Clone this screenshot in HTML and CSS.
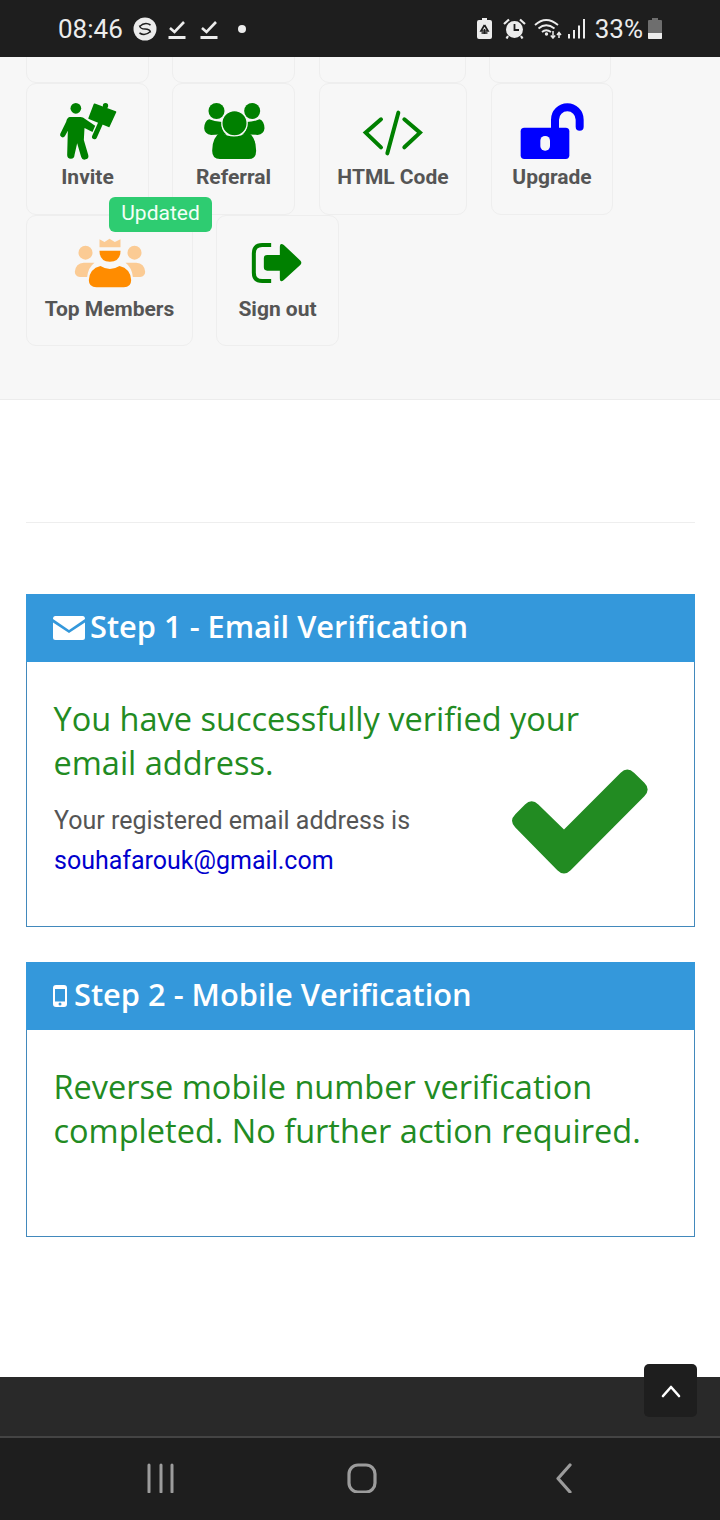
FILE: index.html
```html
<!DOCTYPE html>
<html lang="en">
<head>
  <meta charset="UTF-8">
  <meta name="viewport" content="width=device-width, initial-scale=1.0">
  <title>Verification</title>
  <link rel="stylesheet" href="styles.css">
</head>
<body>
  <!-- phone status bar -->
  <div class="status-bar">
    <span class="clock">08:46</span>
    <svg class="st-icon st-s" viewBox="0 0 24 24"><circle cx="12" cy="12" r="11.5" fill="#ececec"/><path d="M6.5 9.5 Q12 4.5 17.5 8 M6.5 8.5 Q7 12 12 12 Q17 12 17.5 15.5 M6.5 16 Q12 19.5 17.5 14.5" fill="none" stroke="#1e1e1e" stroke-width="1.5"/></svg>
    <svg class="st-icon st-check" viewBox="0 0 18 20"><path d="M2 9 L6.5 13 L16 3" fill="none" stroke="#ececec" stroke-width="2.6"/><rect x="0.500" y="17" width="17" height="3" fill="#ececec"/></svg>
    <svg class="st-icon st-check" viewBox="0 0 18 20"><path d="M2 9 L6.5 13 L16 3" fill="none" stroke="#ececec" stroke-width="2.6"/><rect x="0.500" y="17" width="17" height="3" fill="#ececec"/></svg>
    <span class="st-dot"></span>
    <span class="st-spacer"></span>
    <svg class="st-icon st-saver" viewBox="0 0 15 21"><path d="M5 0 H10 V2 H13 Q15 2 15 4 V19 Q15 21 13 21 H2 Q0 21 0 19 V4 Q0 2 2 2 H5Z" fill="#ececec"/><path d="M7.500 7 L4 13 H6.500 M7.500 7 L11 13 H8.500 M4.500 15 H10.500 M7.500 11 V16" fill="none" stroke="#1e1e1e" stroke-width="1.7"/></svg>
    <svg class="st-icon st-alarm" viewBox="0 0 23 21"><circle cx="11.500" cy="11.500" r="8.500" fill="#ececec"/><path d="M11.500 6 V12 H16" fill="none" stroke="#1e1e1e" stroke-width="1.8"/><path d="M1 6 L6 1.500 M22 6 L17 1.500 M5 18 L3.500 20.500 M18 18 L19.500 20.500" stroke="#ececec" stroke-width="2.2" fill="none"/></svg>
    <svg class="st-icon st-wifi" viewBox="0 0 29 21"><path d="M1 7 Q12 -3 24 7 M4.500 10.500 Q12 4 20.500 10.500 M8 14 Q12 10.500 17 14" fill="none" stroke="#ececec" stroke-width="1.8"/><circle cx="12.500" cy="16" r="1.700" fill="#ececec"/><path d="M19 13 V20 M16.800 17.500 L19 20 L21.200 17.500 M25 20 V15 M23 17 L25 14.500 L27 17" fill="none" stroke="#ececec" stroke-width="1.500"/></svg>
    <svg class="st-icon st-signal" viewBox="0 0 18 21"><path d="M1 16 V20.500 M6 12 V20.500 M11 7.500 V20.500 M16 1 V20.500" stroke="#ececec" stroke-width="2" fill="none"/></svg>
    <span class="st-pct">33%</span>
    <svg class="st-icon st-batt" viewBox="0 0 14 21"><path d="M4 0 H10 V2 H13 Q14 2 14 3 V20 Q14 21 13 21 H1 Q0 21 0 20 V3 Q0 2 1 2 H4Z" fill="#6e6e6e"/><path d="M0 15 H14 V20 Q14 21 13 21 H1 Q0 21 0 20Z" fill="#ececec"/></svg>
  </div>

  <!-- dashboard tiles -->
  <section class="tiles">
    <div class="tile-row tile-row-cut">
      <div class="tile tile-a"></div>
      <div class="tile tile-b"></div>
      <div class="tile tile-c"></div>
      <div class="tile tile-d"></div>
    </div>
    <div class="tile-row">
      <a class="tile tile-a">
        <svg class="tile-icon" viewBox="94.500 126 216 180">
          <circle cx="166" cy="145" r="16" fill="#008000"/>
          <path d="M147 171 H180 Q188 171 194 177 L224 197 L216 216 L192 204 L190 240 L203 284 A11 11 0 0 1 182 291 L170 250 L162 285 A11 11 0 0 1 140 285 L142 212 L133 229 A8 8 0 0 1 119 222 L137 185 Q140 173 147 171Z" fill="#008000"/>
          <path d="M222 133 L285 156 L265 199 L206 175Z" fill="#008000" stroke="#008000" stroke-width="5" stroke-linejoin="round"/>
          <circle cx="255" cy="137" r="8" fill="#008000"/>
          <path d="M240 190 L222 230" stroke="#008000" stroke-width="15" stroke-linecap="round"/>
        </svg>
        <span>Invite</span>
      </a>
      <a class="tile tile-b">
        <svg class="tile-icon" viewBox="532.500 126 216 180">
          <circle cx="588" cy="153" r="24" fill="#008000"/>
          <circle cx="695" cy="153" r="24" fill="#008000"/>
          <path d="M566 178 Q585 186 605 186 Q600 210 618 224 Q590 222 572 225 Q552 222 551 205 Q552 182 566 178Z" fill="#008000"/>
          <path d="M717 178 Q698 186 678 186 Q683 210 665 224 Q693 222 711 225 Q731 222 732 205 Q731 182 717 178Z" fill="#008000"/>
          <circle cx="642" cy="190" r="38" fill="#008000" stroke="#f7f7f7" stroke-width="4"/>
          <path d="M575 272 Q575 232 600 217 Q640 242 682 217 Q707 232 707 272 Q707 297 685 297 H598 Q575 297 575 272Z" fill="#008000"/>
        </svg>
        <span>Referral</span>
      </a>
      <a class="tile tile-c">
        <svg class="tile-icon" viewBox="141 126 216 180">
          <path d="M213 178 L167 218 L213 262 M283 178 L330 218 L283 262 M265 158 L232 280" fill="none" stroke="#008000" stroke-width="12" stroke-linecap="round"/>
        </svg>
        <span>HTML Code</span>
      </a>
      <a class="tile tile-d tile-upgrade">
        <svg class="tile-icon" viewBox="618 126 216 180">
          <rect x="632" y="203" width="146" height="94" rx="11" fill="#0000ff"/>
          <path d="M735 212 V179 A37 37 0 0 1 809 179 V200" fill="none" stroke="#0000ff" stroke-width="24" stroke-linecap="round"/>
          <rect x="691" y="228" width="29" height="44" rx="14" fill="#f7f7f7"/>
        </svg>
        <span>Upgrade</span>
      </a>
    </div>
    <div class="tile-row tile-row-last">
      <a class="tile tile-top">
        <span class="badge">Updated</span>
        <svg class="tile-icon" viewBox="160.500 132 216 180">
          <circle cx="195" cy="188" r="21" fill="#fbcb94"/>
          <circle cx="342" cy="188" r="21" fill="#fbcb94"/>
          <path d="M163 245 Q165 220 190 218 H222 Q203 232 200 261 H178 Q163 258 163 245Z" fill="#fbcb94"/>
          <path d="M374 245 Q372 220 347 218 H315 Q334 232 337 261 H359 Q374 258 374 245Z" fill="#fbcb94"/>
          <path d="M237 148 L252 156 L267 146 L283 156 L300 148 V172 H237Z" fill="#fbcb94"/>
          <path d="M237 182 H300 Q300 215 268 215 Q237 215 237 182Z" fill="#ff8c00"/>
          <path d="M205 270 Q207 236 240 228 Q268 246 297 228 Q330 236 332 270 Q332 292 310 292 H228 Q205 292 205 270Z" fill="#ff8c00"/>
        </svg>
        <span>Top Members</span>
      </a>
      <a class="tile tile-a">
        <svg class="tile-icon" viewBox="664.500 132 216 180">
          <path d="M752 165 H725 Q700 165 700 190 V248 Q700 273 725 273 H752" fill="none" stroke="#008000" stroke-width="12"/>
          <path d="M778 172 Q778 156 790 165 L840 212 Q845 218 840 224 L790 270 Q778 280 778 264 V242 H740 Q730 242 730 232 V205 Q730 195 740 195 H778Z" fill="#008000"/>
        </svg>
        <span>Sign out</span>
      </a>
    </div>
  </section>

  <main class="content">
    <hr class="divider">

    <div class="step step-one">
      <h2 class="step-title">
        <svg class="title-icon mail" viewBox="0 0 32 24"><path d="M2.500 0 H29.500 Q32 0 32 3 L16 14 L0 3 Q0 0 2.500 0Z M0 6.500 L16 17 L32 6.500 V21.500 Q32 24 29.500 24 H2.500 Q0 24 0 21.500Z" fill="#fff"/></svg>
        Step 1 - Email Verification
      </h2>
      <div class="step-body">
        <h3 class="done">You have successfully verified your email address.</h3>
        <div class="reg-row">
          <p class="reg-text">Your registered email address is<br><a class="reg-mail">souhafarouk@gmail.com</a></p>
          <svg class="big-check" viewBox="66 58 408 312"><path d="M222 238 L392 68 Q412 48 432 68 L463 98 Q483 118 463 138 L242 360 Q222 380 202 360 L76 232 Q56 212 76 192 L105 163 Q125 143 145 163 Z" fill="#228b22"/></svg>
        </div>
      </div>
    </div>

    <div class="step step-two">
      <h2 class="step-title">
        <svg class="title-icon phone" viewBox="0 0 14 22"><path d="M3 0 H11 Q14 0 14 3 V19 Q14 22 11 22 H3 Q0 22 0 19 V3 Q0 0 3 0Z M2 4 V16.500 H12 V4Z M7 17.500 A1.500 1.500 0 1 0 7 20.500 A1.500 1.500 0 1 0 7 17.500Z" fill="#fff" fill-rule="evenodd"/></svg>
        Step 2 - Mobile Verification
      </h2>
      <div class="step-body">
        <h3 class="done">Reverse mobile number verification completed. No further action required.</h3>
      </div>
    </div>
  </main>

  <footer class="site-footer">
    <a class="to-top">
      <svg viewBox="0 0 20 14" width="20" height="14"><path d="M2 12 L10 3 L18 12" fill="none" stroke="#fff" stroke-width="2.600" stroke-linecap="round" stroke-linejoin="round"/></svg>
    </a>
  </footer>

  <!-- phone nav bar -->
  <nav class="nav-bar">
    <svg class="nav-icon" viewBox="0 0 30 30"><path d="M3 2 V29 M15 2 V29 M26 2 V29" stroke="#9c9c9c" stroke-width="3" stroke-linecap="round" fill="none"/></svg>
    <svg class="nav-icon" viewBox="0 0 30 30"><rect x="2" y="2" width="26" height="27" rx="9" fill="none" stroke="#9c9c9c" stroke-width="3.200"/></svg>
    <svg class="nav-icon" viewBox="0 0 30 30"><path d="M22 2 L10 15.500 L22 29" fill="none" stroke="#9c9c9c" stroke-width="3.200" stroke-linecap="round" stroke-linejoin="round"/></svg>
  </nav>
</body>
</html>
```

FILE: styles.css
```css
* {
  box-sizing: border-box;
}
html, body {
  margin: 0;
  padding: 0;
}
body {
  width: 720px;
  height: 1520px;
  overflow: hidden;
  display: flex;
  flex-direction: column;
  background: #fff;
  font-family: Roboto, Arial, sans-serif;
}

/* status bar */
.status-bar {
  height: 57px;
  flex-shrink: 0;
  display: flex;
  align-items: center;
  padding: 0 58px;
  background: #1e1e1e;
  color: #ececec;
  font-size: 26px;
}
.clock {
  width: 75px;
}
.st-icon {
  display: block;
  flex-shrink: 0;
}
.st-s {
  width: 24px;
  height: 24px;
}
.st-check {
  width: 18px;
  height: 20px;
  margin-left: 14px;
}
.st-s + .st-check {
  margin-left: 11px;
}
.st-dot {
  width: 8px;
  height: 8px;
  margin-left: 20px;
  border-radius: 50%;
  background: #ececec;
}
.st-spacer {
  flex: 1;
}
.st-saver {
  width: 15px;
  height: 21px;
}
.st-alarm {
  width: 23px;
  height: 21px;
  margin-left: 11px;
}
.st-wifi {
  width: 29px;
  height: 21px;
  margin-left: 8px;
}
.st-signal {
  width: 18px;
  height: 21px;
  margin-left: 5px;
}
.st-pct {
  margin-left: 9px;
}
.st-batt {
  width: 14px;
  height: 21px;
  margin-left: 5px;
}

/* tiles */
.tiles {
  height: 343px;
  flex-shrink: 0;
  overflow: hidden;
  padding-left: 26px;
  background: #f7f7f7;
  border-bottom: 1px solid #ececec;
}
.tile-row {
  display: flex;
  gap: 23px;
}
.tile-row-cut {
  height: 26px;
  align-items: flex-end;
}
.tile-row-cut .tile {
  height: 60px;
  flex-shrink: 0;
  border-radius: 10px;
}
.tile-row-cut .tile-c {
  width: 147px;
}
.tile {
  position: relative;
  display: flex;
  flex-direction: column;
  align-items: center;
  height: 132px;
  padding-top: 18px;
  border: 1px solid #eeeeee;
  border-radius: 10px;
  background: #f7f7f7;
  color: #555;
  font-size: 21px;
  font-weight: 700;
}
.tile-row-last .tile {
  height: 131px;
}
.tile-a,
.tile-b {
  width: 123px;
}
.tile-c {
  width: 148px;
  margin-left: 1px;
}
.tile-d {
  width: 122px;
}
.tile-upgrade {
  margin-left: 1px;
}
.tile-top {
  width: 167px;
}
.tile-icon {
  display: block;
  width: 72px;
  height: 60px;
  margin-bottom: 3px;
  flex-shrink: 0;
}
.badge {
  position: absolute;
  top: -19px;
  left: 82px;
  width: 103px;
  height: 35px;
  border-radius: 6px;
  background: #2ecc71;
  color: #f2fff7;
  font-size: 21px;
  font-weight: 400;
  line-height: 33px;
  text-align: center;
}

/* verification steps */
.content {
  flex: 1;
  padding: 0 25px 0 26px;
}
.divider {
  height: 1px;
  margin: 122px 0 71px;
  border: 0;
  background: #eeeeee;
}
.step {
  border: 1px solid #4289bc;
  margin-bottom: 35px;
}
.step-one {
  height: 333px;
}
.step-two {
  height: 275px;
}
.step-title {
  display: flex;
  align-items: center;
  height: 68px;
  margin: -1px -1px 0;
  padding: 0 0 4px 27px;
  background: #3498db;
  color: #fff;
  font-family: "Open Sans", Arial, sans-serif;
  font-size: 30.800px;
  font-weight: 600;
}
.title-icon {
  display: block;
  flex-shrink: 0;
  margin-top: 4px;
}
.mail {
  width: 32px;
  height: 24px;
  margin-right: 5px;
}
.phone {
  width: 14px;
  height: 22px;
  margin-right: 7px;
}
.step-body {
  padding: 35px 40px 0 27px;
}
.done {
  margin: 0 0 0 -0.500px;
  color: #228b22;
  font-family: "Open Sans", Arial, sans-serif;
  font-size: 32.500px;
  font-weight: 400;
  line-height: 43.500px;
}
.reg-row {
  display: flex;
  justify-content: space-between;
  align-items: flex-start;
  margin-right: -13px;
}
.reg-text {
  margin: 17px 0 0;
  color: #555;
  font-size: 25px;
  line-height: 40px;
}
.reg-mail {
  color: #0000cd;
}
.big-check {
  display: block;
  width: 136px;
  height: 105px;
  margin: -15px 19px 0 0;
  flex-shrink: 0;
}

/* footer */
.site-footer {
  position: relative;
  height: 59px;
  flex-shrink: 0;
  background: #292929;
}
.to-top {
  position: absolute;
  top: -13px;
  right: 23px;
  width: 53px;
  height: 53px;
  display: flex;
  align-items: center;
  justify-content: center;
  border-radius: 5px;
  background: #1e1e1e;
}

/* phone nav */
.nav-bar {
  height: 84px;
  flex-shrink: 0;
  display: flex;
  justify-content: space-between;
  padding: 25px 142px 0 146px;
  border-top: 2px solid #444;
  background: #1e1e1e;
}
.nav-icon {
  display: block;
  width: 30px;
  height: 30px;
}
```
